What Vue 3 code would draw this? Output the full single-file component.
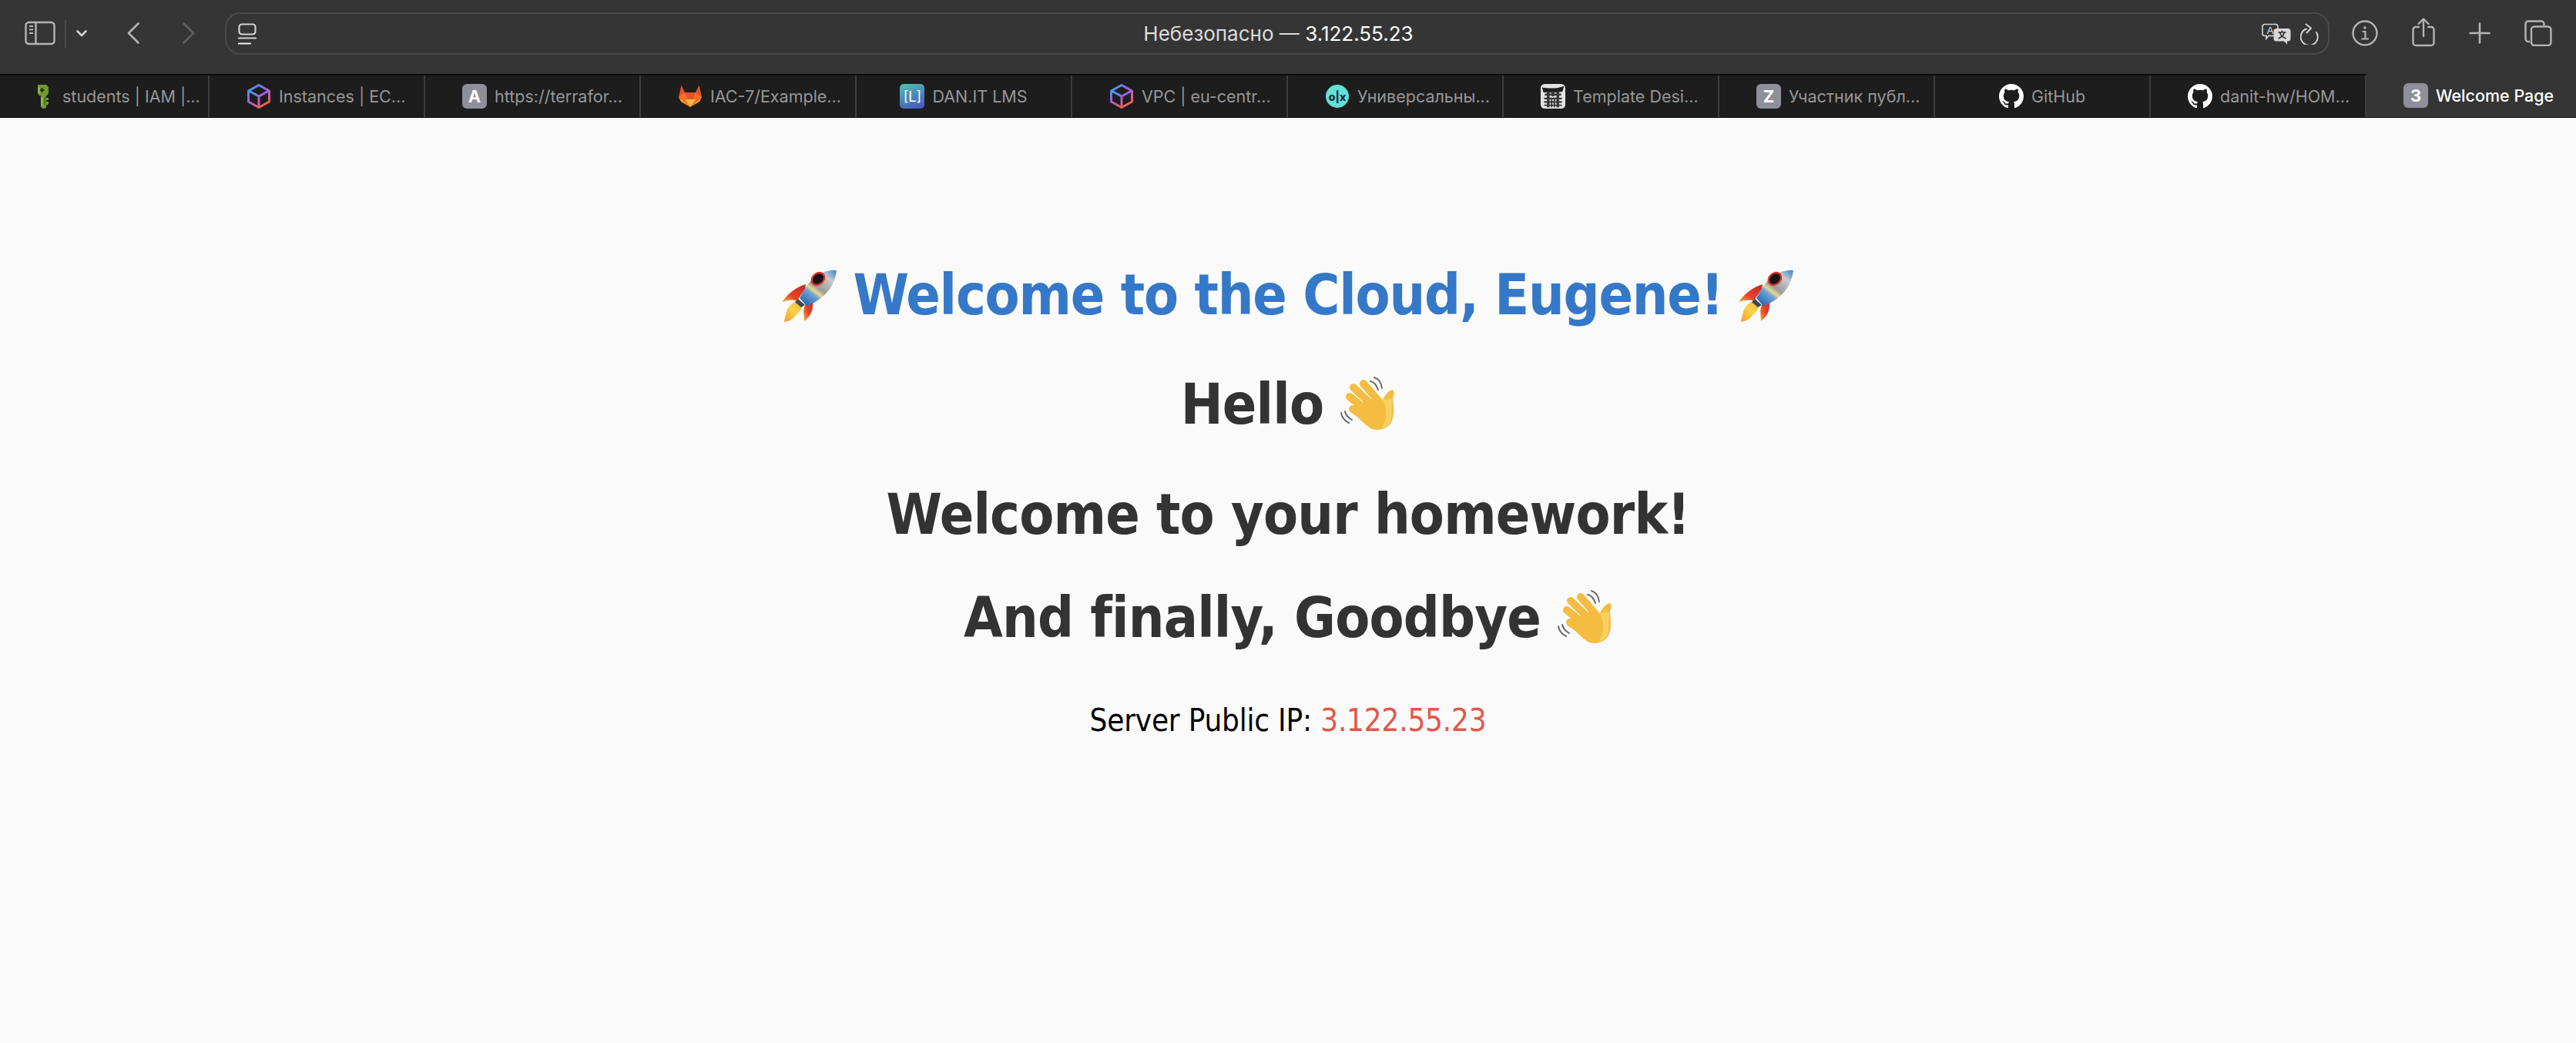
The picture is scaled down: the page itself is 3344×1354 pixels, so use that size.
<script setup>
const tabs = [
  { icon: 'key', title: 'students | IAM |...', cut: true },
  { icon: 'cube', title: 'Instances | EC...', cut: true },
  { icon: 'letter', letter: 'A', title: 'https://terrafor...', cut: true },
  { icon: 'gitlab', title: 'IAC-7/Example...', cut: true },
  { icon: 'lms', title: 'DAN.IT LMS' },
  { icon: 'cube', title: 'VPC | eu-centr...', cut: true },
  { icon: 'olx', title: 'Универсальны...', cut: true },
  { icon: 'torii', title: 'Template Desi...', cut: true },
  { icon: 'letter', letter: 'Z', title: 'Участник публ...', cut: true },
  { icon: 'github', title: 'GitHub' },
  { icon: 'github', title: 'danit-hw/HOM...', cut: true },
  { icon: 'letter', letter: '3', title: 'Welcome Page', active: true, cut: true }
]
</script>

<template>
  <div class="window">
    <header class="toolbar">
      <svg class="ic-sidebar" width="40" height="32" viewBox="0 0 40 32" fill="none" stroke="#b4b4b4" stroke-width="2.4">
        <rect x="1.5" y="2" width="37" height="28" rx="4" />
        <path d="M14.5 2v28" />
        <path d="M6 7h5M6 11.5h5M6 16h5" stroke-width="2" />
      </svg>
      <span class="tool-sep"></span>
      <svg class="ic-chevron" width="14" height="9" viewBox="0 0 14 9" fill="none" stroke="#d0d0d0" stroke-width="2.6" stroke-linecap="round" stroke-linejoin="round">
        <path d="M1.5 1.5 7 7l5.5-5.5" />
      </svg>
      <svg class="ic-back" width="16" height="28" viewBox="0 0 16 28" fill="none" stroke="#b4b4b4" stroke-width="2.6" stroke-linecap="round" stroke-linejoin="round">
        <path d="M14.5 1.5 2 14l12.5 12.5" />
      </svg>
      <svg class="ic-forward" width="16" height="28" viewBox="0 0 16 28" fill="none" stroke="#5f5f5f" stroke-width="2.6" stroke-linecap="round" stroke-linejoin="round">
        <path d="M1.5 1.5 14 14 1.5 26.5" />
      </svg>

      <div class="url-bar">
        <div class="url-left">
          <svg width="24" height="28" viewBox="0 0 24 28" fill="none" stroke="#d2d2d2" stroke-width="2.2" stroke-linecap="round">
            <rect x="1.5" y="1.5" width="21" height="13" rx="3.5" />
            <path d="M1 19.5h22" />
            <path d="M1 26.5h15" stroke="#f0f0f0" />
          </svg>
        </div>
        <div class="url-text">Небезопасно — <span class="url-host">3.122.55.23</span></div>
        <div class="url-right">
          <svg width="38" height="28" viewBox="0 0 38 28">
            <path d="M4 1.5h14a3 3 0 0 1 3 3v9a3 3 0 0 1-3 3H9l-3 3.5v-3.500H4a3 3 0 0 1-3-3v-9a3 3 0 0 1 3-3Z" fill="#353535" stroke="#d8d8d8" stroke-width="1.6" />
            <text x="11" y="13.5" class="tr-a">A</text>
            <path d="M19 7h15a3.500 3.500 0 0 1 3.500 3.500V20a3.500 3.500 0 0 1-3.500 3.500h-1v4l-4-4H19a3.500 3.500 0 0 1-3.500-3.500v-9.500A3.500 3.500 0 0 1 19 7Z" fill="#d8d8d8" />
            <path d="M26.500 9.500v2M21.500 12h10M29.500 12c-.8 3.500-4 6.500-8 8M23.500 12c.8 3.500 4 6.500 8 8" fill="none" stroke="#2e2e2e" stroke-width="1.500" />
          </svg>
          <svg width="24" height="28" viewBox="0 0 24 28" fill="none" stroke="#d4d4d4" stroke-width="1.900" stroke-linecap="round" stroke-linejoin="round">
            <path d="M8 7.500A11 11 0 1 0 21 12" />
            <path d="M7.500 1.500 14 6.500 8.500 12.500" />
          </svg>
        </div>
      </div>

      <svg class="ic-info" width="34" height="34" viewBox="0 0 34 34" fill="none" stroke="#b4b4b4" stroke-width="2.400">
        <circle cx="17" cy="17" r="15.500" />
        <circle cx="17" cy="10" r="1.800" fill="#b4b4b4" stroke="none" />
        <path d="M13.500 15H17.500V24M12.500 24.500H22" stroke-width="2.200" />
      </svg>
      <svg class="ic-share" width="30" height="38" viewBox="0 0 30 38" fill="none" stroke="#b4b4b4" stroke-width="2.400" stroke-linecap="round" stroke-linejoin="round">
        <path d="M9 12H5a3.500 3.500 0 0 0-3.500 3.500v17A3.500 3.500 0 0 0 5 36h20a3.500 3.500 0 0 0 3.500-3.500v-17A3.500 3.500 0 0 0 25 12h-4" />
        <path d="M15 24V2M8.500 8 15 1.500 21.500 8" />
      </svg>
      <svg class="ic-plus" width="28" height="28" viewBox="0 0 28 28" fill="none" stroke="#b4b4b4" stroke-width="2.600" stroke-linecap="round">
        <path d="M14 1.500v25M1.500 14h25" />
      </svg>
      <svg class="ic-tabs" width="36" height="34" viewBox="0 0 36 34" fill="none" stroke="#b4b4b4" stroke-width="2.400">
        <path d="M7 28H5a3.500 3.500 0 0 1-3.500-3.500V5A3.500 3.500 0 0 1 5 1.500h17A3.500 3.500 0 0 1 25.500 5v2" />
        <rect x="9" y="8.500" width="25.500" height="24.500" rx="4" />
      </svg>
    </header>

    <nav class="tab-strip">
      <div
        v-for="(tab, i) in tabs"
        :key="i"
        class="tab"
        :class="{ active: tab.active, cut: tab.cut }"
      >
        <span class="favicon">
          <span v-if="tab.icon === 'letter'" class="fav-letter">{{ tab.letter }}</span>

          <svg v-else-if="tab.icon === 'key'" width="32" height="32" viewBox="0 0 32 32">
            <path d="M10 1h11l3 3v8l-2 3h-1v3h3v3h-3v2h3v3l-3 2v3l-3 1-3-1-1-2V15h-2l-2-3V4Z" fill="#6f9a30" />
            <path d="M14.500 5h2v2h2v2h-2v2h-2V9h-2V7h2Z" fill="#22300c" />
            <path d="M10 4h3v8h-3ZM14 17h3v11h-3Z" fill="#8ab544" />
            <path d="M18 17h2v10h-2Z" fill="#4c6c1e" />
          </svg>

          <svg v-else-if="tab.icon === 'cube'" width="32" height="32" viewBox="0 0 32 32" fill="none" stroke-width="3" stroke-linejoin="round">
            <defs>
              <linearGradient id="cube-g" x1="0" y1="0" x2="0.6" y2="1">
                <stop offset="0" stop-color="#2fa8e8" />
                <stop offset=".5" stop-color="#a45ee8" />
                <stop offset="1" stop-color="#f0604a" />
              </linearGradient>
            </defs>
            <path d="M16 1.500 29.500 9v14L16 30.500 2.500 23V9Z" stroke="url(#cube-g)" />
            <path d="M3 9 16 16l13-7M16 16v14" stroke="url(#cube-g)" />
          </svg>

          <svg v-else-if="tab.icon === 'gitlab'" width="32" height="32" viewBox="0 0 32 32">
            <path d="M16 30 1 17 4.500 1.500 9 11h14l4.500-9.500L31 17Z" fill="#e2532d" />
            <path d="M16 30 1 17l8-6ZM16 30l15-13-8-6Z" fill="#fc6d26" />
            <path d="M16 30 1 17l3 6ZM16 30l15-13-3 6Z" fill="#f7a13c" />
            <path d="M16 30 9 20h14Z" fill="#fcb64e" />
          </svg>

          <span v-else-if="tab.icon === 'lms'" class="fav-lms">[L]</span>

          <span v-else-if="tab.icon === 'olx'" class="fav-olx">o|x</span>

          <svg v-else-if="tab.icon === 'torii'" width="36" height="36" viewBox="0 0 36 36">
            <rect width="36" height="36" rx="6" fill="#e2e2e2" />
            <path d="M2 5c9 2 23 2 32-2l-2 8c-9 2-19 2-28 1Z" fill="#1f1f1f" />
            <path d="M6 14h24v3H6ZM9 11h4v23H9ZM23 11h4v23h-4ZM16 11h4v7h-4ZM5 20h26v2.500H5ZM5 25h26v2.500H5ZM5 30h26v2H5ZM15 20h2v14h-2ZM19 20h2v14h-2Z" fill="#3a3a3a" />
          </svg>

          <svg v-else-if="tab.icon === 'github'" width="32" height="32" viewBox="0 0 16 16">
            <path fill="#fff" fill-rule="evenodd" d="M8 0C3.580 0 0 3.580 0 8c0 3.540 2.290 6.530 5.470 7.590.4.070.55-.17.55-.38 0-.19-.01-.82-.01-1.490-2.010.37-2.530-.49-2.690-.94-.09-.23-.48-.94-.82-1.130-.28-.15-.68-.52-.01-.53.63-.01 1.080.58 1.230.82.720 1.210 1.870.87 2.330.66.070-.52.280-.87.510-1.070-1.780-.2-3.640-.89-3.640-3.950 0-.87.310-1.590.820-2.150-.08-.2-.36-1.020.08-2.120 0 0 .67-.21 2.200.82.640-.18 1.320-.27 2-.27s1.360.09 2 .27c1.530-1.040 2.200-.82 2.200-.82.440 1.100.16 1.920.08 2.120.51.560.82 1.270.82 2.150 0 3.070-1.870 3.750-3.650 3.950.290.250.540.730.540 1.480 0 1.070-.01 1.930-.01 2.200 0 .210.150.460.550.380A8.010 8.010 0 0 0 16 8c0-4.420-3.580-8-8-8Z" />
          </svg>
        </span>
        <span class="tab-title">{{ tab.title }}</span>
      </div>
    </nav>

    <main class="page">
      <h1 class="title">
        <svg class="emoji rocket" width="100" height="85" viewBox="0 0 100 85">
          <defs>
            <linearGradient id="rocket-body" x1="0.1" y1="1" x2="0.9" y2="0">
              <stop offset="0" stop-color="#1f5fa8" />
              <stop offset=".32" stop-color="#6fa2d6" />
              <stop offset=".4" stop-color="#e9d98a" />
              <stop offset=".5" stop-color="#9a9c9c" />
              <stop offset=".8" stop-color="#c8cccc" />
              <stop offset="1" stop-color="#4f8fd0" />
            </linearGradient>
            <linearGradient id="rocket-flame" x1="0" y1="1" x2="1" y2="0">
              <stop offset="0" stop-color="#f59a2c" />
              <stop offset=".5" stop-color="#fbd34c" />
              <stop offset="1" stop-color="#f3b02e" />
            </linearGradient>
            <linearGradient id="rocket-fin" x1="0" y1="1" x2="1" y2="0">
              <stop offset="0" stop-color="#f9b233" />
              <stop offset=".4" stop-color="#e6402a" />
              <stop offset="1" stop-color="#c32a20" />
            </linearGradient>
          </defs>
          <path d="M43 28C30 32 20 40 12 51c8-3 15-3 20-2l10-15Z" fill="url(#rocket-fin)" />
          <path d="M54 42C48 46 43 50 40 62l1 14c7-6 11-12 11-20 1-5 1-10 2-14Z" fill="url(#rocket-fin)" />
          <path d="M34 49C27 50 20 56 18 64c-1 5-3 9-3 13 6-1 10-3 14-7 5-5 9-11 11-17Z" fill="url(#rocket-flame)" />
          <path d="M33 47 42 55 37 58 29 51Z" fill="#3d4a4d" />
          <path d="M83 10C70 8 54 17 44 30L35 46l9 10c4-1 8-3 13-6 14-9 24-22 26-40Z" fill="url(#rocket-body)" />
          <ellipse cx="59" cy="21" rx="9" ry="7" transform="rotate(-40 59 21)" fill="#141416" stroke="#d43325" stroke-width="2.500" />
        </svg>
        <span class="title-text">Welcome to the Cloud, Eugene!</span>
        <svg class="emoji rocket" width="100" height="85" viewBox="0 0 100 85">
          <path d="M43 28C30 32 20 40 12 51c8-3 15-3 20-2l10-15Z" fill="url(#rocket-fin)" />
          <path d="M54 42C48 46 43 50 40 62l1 14c7-6 11-12 11-20 1-5 1-10 2-14Z" fill="url(#rocket-fin)" />
          <path d="M34 49C27 50 20 56 18 64c-1 5-3 9-3 13 6-1 10-3 14-7 5-5 9-11 11-17Z" fill="url(#rocket-flame)" />
          <path d="M33 47 42 55 37 58 29 51Z" fill="#3d4a4d" />
          <path d="M83 10C70 8 54 17 44 30L35 46l9 10c4-1 8-3 13-6 14-9 24-22 26-40Z" fill="url(#rocket-body)" />
          <ellipse cx="59" cy="21" rx="9" ry="7" transform="rotate(-40 59 21)" fill="#141416" stroke="#d43325" stroke-width="2.500" />
        </svg>
      </h1>

      <h2 class="line line-hello">
        <span class="line-text">Hello</span>
        <svg class="emoji hand" width="95" height="90" viewBox="0 0 95 90">
          <use href="#wave-hand" />
        </svg>
      </h2>
      <h2 class="line line-home"><span class="line-text">Welcome to your homework!</span></h2>
      <h2 class="line line-bye">
        <span class="line-text">And finally, Goodbye</span>
        <svg class="emoji hand" width="95" height="90" viewBox="0 0 95 90">
          <g id="wave-hand">
            <g fill="none" stroke="#f4bd42" stroke-width="10" stroke-linecap="round">
              <path d="M43 18 62 40M30 23 52 44M25 35 46 52M29 51 46 63" />
            </g>
            <path d="M46 40 62 36l6 3c3-6 6-11 12-13 4 1 3 6 1 10 1 14 3 24-3 34-6 8-18 10-26 6C44 70 34 62 30 52Z" fill="#f4bd42" />
            <path d="M68 39c6 12 6 26-2 37 8-2 12-6 13-14 1-9 0-18 1-25Z" fill="#f9d064" />
            <g fill="none" stroke="#6b6b6b" stroke-width="2" stroke-linecap="round">
              <path d="M52 15c5 1 8 5 10 11M57 10c6 2 9 6 10 14" />
              <path d="M14 56c1 6 4 10 10 13M19 54c1 5 4 8 9 11" />
            </g>
          </g>
        </svg>
      </h2>
      <p class="ip">Server Public IP: <span class="ip-value">3.122.55.23</span></p>
    </main>
  </div>
</template>

<style>
html,
body {
  margin: 0;
  background: #fafafa;
}
</style>

<style scoped>
.window {
  width: 3344px;
  min-height: 1354px;
  display: flex;
  flex-direction: column;
  font-family: Inter, "Liberation Sans", sans-serif;
}

.toolbar {
  height: 96px;
  background: #353535;
  display: flex;
  align-items: center;
  padding-left: 32px;
  box-sizing: border-box;
  flex-shrink: 0;
}

.ic-sidebar {
  margin-top: -10px;
}

.tool-sep {
  width: 2px;
  height: 36px;
  background: #4c4c4c;
  margin: -8px 0 0 12px;
}

.ic-chevron {
  margin: -9px 0 0 13px;
}

.ic-back {
  margin: -10px 0 0 52px;
}

.ic-forward {
  margin: -10px 0 0 56px;
}

.url-bar {
  width: 2732px;
  height: 55px;
  margin: -9px 0 0 39px;
  box-sizing: border-box;
  border: 2px solid #4b4b4b;
  border-radius: 20px;
  display: grid;
  grid-template-columns: 1fr auto 1fr;
  align-items: center;
  padding: 0 12px 0 15px;
}

.url-left {
  display: flex;
}

.url-right {
  display: flex;
  justify-content: flex-end;
  align-items: center;
  gap: 12px;
}

.url-text {
  font-size: 26px;
  color: #dcdcdc;
  white-space: nowrap;
}

.url-host {
  color: #fff;
}

.tr-a {
  font-family: "Liberation Sans", sans-serif;
  font-size: 13px;
  fill: #e0e0e0;
  text-anchor: middle;
}

.ic-info {
  margin: -10px 0 0 29px;
}

.ic-share {
  margin: -12px 0 0 44px;
}

.ic-plus {
  margin: -10px 0 0 44px;
}

.ic-tabs {
  margin: -10px 0 0 44px;
}

.tab-strip {
  height: 57px;
  box-sizing: border-box;
  display: grid;
  grid-template-columns: 272px repeat(10, 280px) 272px;
  background: #1d1d1d;
  border-top: 2px solid #0c0c0c;
  border-bottom: 1px solid #0c0c0c;
  flex-shrink: 0;
}

.tab {
  display: flex;
  align-items: center;
  justify-content: center;
  gap: 10px;
  box-sizing: border-box;
  border-right: 2px solid #3c3c3c;
  white-space: nowrap;
  overflow: hidden;
}

.tab.cut {
  justify-content: flex-start;
  padding-left: 48px;
}

.tab:first-child {
  padding-left: 39px;
}

.tab.active {
  background: #353535;
  border-right: 0;
  margin-top: -2px;
}

.favicon {
  width: 32px;
  height: 32px;
  display: flex;
  align-items: center;
  justify-content: center;
  flex-shrink: 0;
}

.tab-title {
  font-size: 21.5px;
  color: #979797;
}

.active .tab-title {
  color: #fff;
  font-weight: 500;
}

.fav-letter {
  width: 32px;
  height: 32px;
  border-radius: 6px;
  background: #8f8f9b;
  color: #fff;
  font-size: 22px;
  font-weight: 700;
  display: flex;
  align-items: center;
  justify-content: center;
}

.fav-lms {
  width: 32px;
  height: 32px;
  border-radius: 5px;
  background: linear-gradient(160deg, #4fc2b0, #4750c0);
  color: #fff;
  font-size: 18px;
  display: flex;
  align-items: center;
  justify-content: center;
}

.fav-olx {
  width: 30px;
  height: 30px;
  border-radius: 50%;
  background: #63e0d8;
  color: #0b2a33;
  font-size: 14px;
  font-weight: 800;
  display: flex;
  align-items: center;
  justify-content: center;
}

.page {
  flex: 1;
  background: #fafafa;
  display: flex;
  flex-direction: column;
  align-items: center;
  padding-top: 186px;
  font-family: "DejaVu Sans", Verdana, sans-serif;
}

.title,
.line {
  margin: 0;
  display: flex;
  align-items: center;
  font-size: 73px;
  font-weight: 700;
  font-stretch: condensed;
  letter-spacing: -0.8px;
  white-space: nowrap;
  color: #333;
  line-height: 88px;
  height: 88px;
}

.title {
  color: #3678c8;
  letter-spacing: -1.2px;
}

.line-hello {
  margin-top: 54px;
}

.line-home {
  margin-top: 55px;
}

.line-bye {
  margin-top: 46px;
}

.emoji {
  flex-shrink: 0;
}

.rocket {
  margin: 0 5px 0 9px;
}

.hand {
  margin: 0 -11px 0 9px;
}

.ip {
  margin: 66px 0 0;
  font-size: 40px;
  font-stretch: condensed;
  letter-spacing: -0.2px;
  color: #000;
}

.ip-value {
  color: #e0584a;
}
</style>
